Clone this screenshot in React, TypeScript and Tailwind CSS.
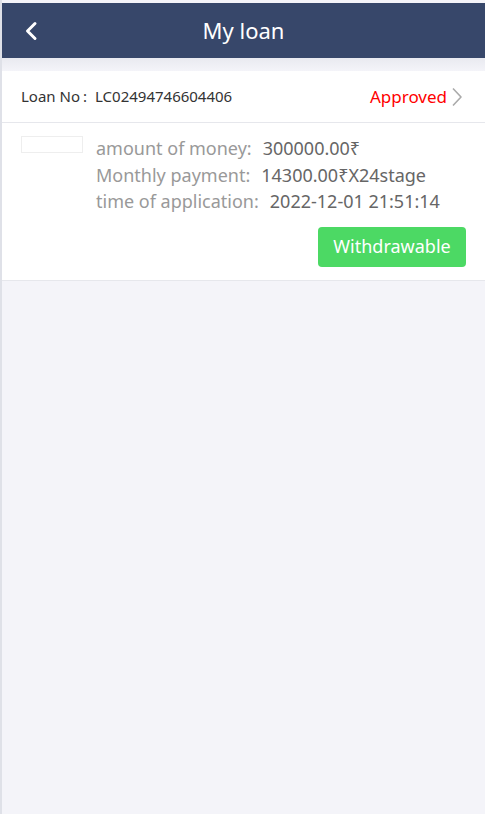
export default function App() {
  return (
    <div
      className="min-h-[814px] bg-[#f4f4f9] pt-[3px] border-l-2 border-[#dfe1e8] text-[#333]"
      style={{ fontFamily: '"Noto Sans", "Open Sans", sans-serif' }}
    >
      <header className="relative h-[55px] bg-[#37476a] flex items-center justify-center">
        <button className="absolute left-[20px] top-[17px] w-[18px] h-[22px] flex items-center justify-center">
          <svg width="14" height="20" viewBox="0 0 14 20" fill="none">
            <path d="M11 2.5 L3.5 10 L11 17.5" stroke="white" strokeWidth="3" strokeLinecap="round" strokeLinejoin="round" />
          </svg>
        </button>
        <h1 className="text-white text-[22px] leading-none -mt-[1px]">My loan</h1>
      </header>

      <div className="h-[13px] bg-gradient-to-b from-[#e9eaf0] to-[#f4f4f9]" />

      <div className="bg-white border-b border-[#e6e7ec]">
        <div className="flex items-center justify-between h-[52px] pl-[19px] pr-[22px] border-b border-[#e6e7ec]">
          <div className="text-[15px] text-[#333]">
            Loan No<span className="ml-[3px]">:</span>
            <span className="ml-[8px]">LC02494746604406</span>
          </div>
          <div className="flex items-center text-[17px] text-[#ff0000]">
            Approved
            <svg width="12" height="20" viewBox="0 0 12 20" fill="none" className="ml-[4px]">
              <path d="M2 1.5 L10 10 L2 18.5" stroke="#aaaaaa" strokeWidth="1.6" strokeLinejoin="round" />
            </svg>
          </div>
        </div>

        <div className="flex pl-[19px] pr-[19px] pt-[13px] pb-[13px]">
          <div className="w-[62px] h-[17px] border border-[#eeeeee] shrink-0" />
          <div className="ml-[13px] flex-1 text-[18px] leading-[26.5px] -mt-[1px]">
            <div>
              <span className="text-[#999]">amount of money:</span>
              <span className="text-[#666] ml-[11px]">300000.00₹</span>
            </div>
            <div>
              <span className="text-[#999]">Monthly payment:</span>
              <span className="text-[#666] ml-[11px]">14300.00₹X24stage</span>
            </div>
            <div>
              <span className="text-[#999]">time of application:</span>
              <span className="text-[#666] ml-[11px]">2022-12-01 21:51:14</span>
            </div>
            <div className="flex justify-end mt-[12px]">
              <button className="h-[40px] w-[148px] rounded-[4px] bg-[#4cd964] text-white text-[18px]">
                Withdrawable
              </button>
            </div>
          </div>
        </div>
      </div>
    </div>
  );
}
